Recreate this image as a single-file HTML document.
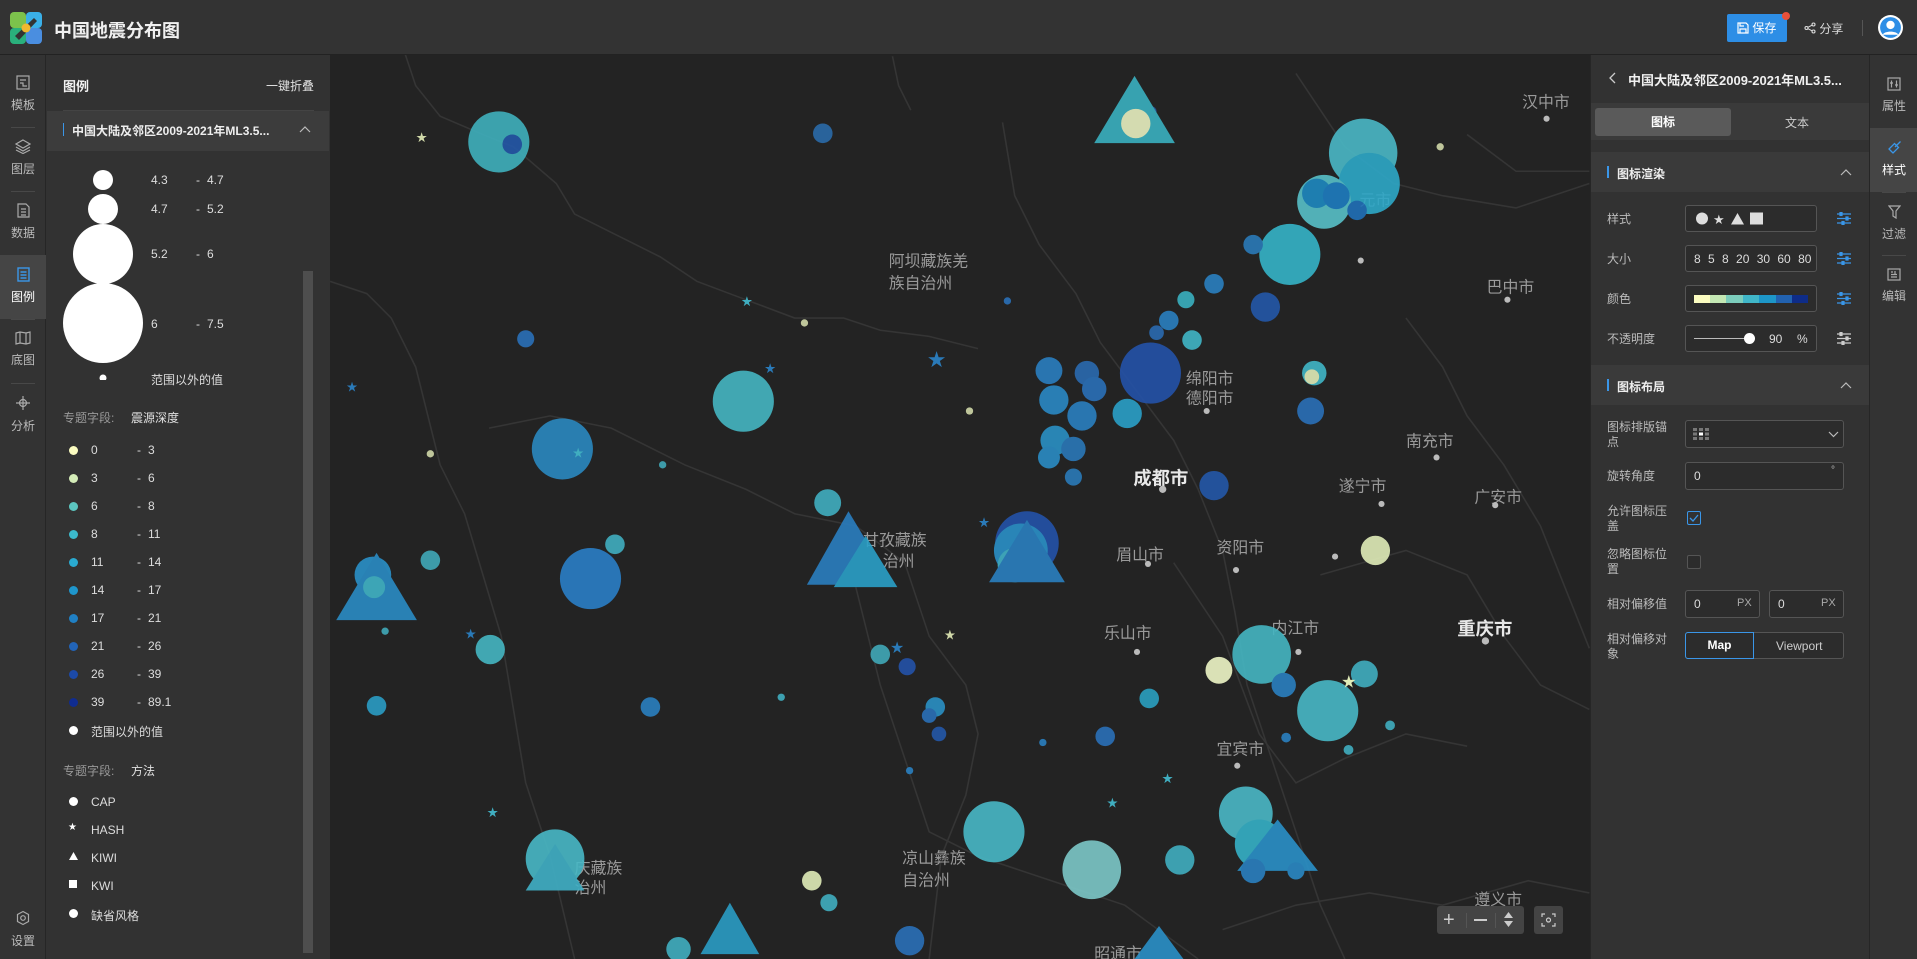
<!DOCTYPE html>
<html><head><meta charset="utf-8">
<style>
*{margin:0;padding:0;box-sizing:border-box}
body{width:1917px;height:959px;overflow:hidden;background:#232323;font-family:"Liberation Sans","Noto Sans CJK SC",sans-serif;color:#ddd;position:relative;font-size:12px}
.abs{position:absolute}
#map{position:absolute;left:0;top:0;width:1917px;height:959px}
#hdr{left:0;top:0;width:1917px;height:55px;background:#333;border-bottom:1px solid #222}
#lbar{left:0;top:55px;width:46px;height:904px;background:#333;border-right:1px solid #262626}
#lpanel{left:46px;top:55px;width:284px;height:904px;background:#323232}
#rpanel{left:1590px;top:55px;width:279px;height:904px;background:#323232;border-left:1px solid #262626}
#rbar{left:1869px;top:55px;width:48px;height:904px;background:#333;border-left:1px solid #262626}
.ni{position:absolute;left:0;width:46px;text-align:center;font-size:12px;color:#bbb}
.ni svg{display:block;margin:0 auto 6px}
.sep{position:absolute;left:11px;width:24px;height:1px;background:#484848}
.t{position:absolute;white-space:nowrap}
.dot{position:absolute;width:9px;height:9px;border-radius:50%}
.lbl{position:absolute;left:16px;color:#bbb;font-size:12px;line-height:15px}
.box{position:absolute;border:1px solid #555;border-radius:3px;background:#2c2c2c}
.adj{position:absolute;left:246px}
</style></head><body>
<svg id="map" viewBox="0 0 1568 784" preserveAspectRatio="none">
<rect width="1568" height="784" fill="#232323"/>
<g fill="none" stroke="#353535" stroke-width="1.3">
<path d="M330 40 L340 70 L360 95 L395 110 L420 120 L455 150 L470 175 L500 190 L540 210 L570 230 L610 245 L650 260 L690 260 L720 270 L760 275 L800 285"/>
<path d="M270 230 L300 240 L320 260 L340 300 L350 340 L360 380 L380 420 L395 470 L410 520 L420 580 L430 640 L450 700 L470 784"/>
<path d="M400 350 L450 340 L500 350 L560 380 L610 400 L650 420 L700 430 L740 460 L760 520 L790 560 L800 600 L790 650 L770 700 L760 784"/>
<path d="M820 100 L830 160 L850 200 L880 240 L900 280 L930 320 L960 360 L980 400 L1000 450 L1010 500 L1020 560 L1040 620 L1060 680 L1080 740 L1100 784"/>
<path d="M1060 60 L1080 90 L1100 120 L1140 150 L1180 160 L1240 170 L1300 150"/>
<path d="M1150 260 L1180 300 L1200 340 L1230 380 L1260 430 L1280 480 L1300 530"/>
<path d="M1080 470 L1150 450 L1200 470 L1230 520 L1260 560 L1300 580"/>
<path d="M960 460 L1000 520 L1030 600 L1060 640 L1100 620 L1150 600 L1200 610"/>
<path d="M700 480 L720 560 L740 620 L760 680 L800 700 L860 720 L920 740 L980 784"/>
<path d="M1200 110 L1240 140 L1300 140"/>
<path d="M1000 760 L1060 740 L1120 730 L1180 740 L1250 720 L1300 730"/>
<path d="M730 46 L735 70 L745 90"/>
</g>
<g font-family="Liberation Sans,Noto Sans CJK SC,sans-serif" font-size="13" fill="#9a9a9a">
<text x="727" y="218">阿坝藏族羌</text><text x="727" y="236">族自治州</text>
<text x="970" y="314">绵阳市</text><text x="970" y="330">德阳市</text>
<text x="927" y="396" fill="#e8e8e8" font-size="15" font-weight="bold">成都市</text>
<text x="1150" y="365">南充市</text><text x="1095" y="402">遂宁市</text><text x="1206" y="411">广安市</text>
<text x="913" y="458">眉山市</text><text x="995" y="452">资阳市</text><text x="903" y="522">乐山市</text>
<text x="1040" y="518">内江市</text><text x="1192" y="519" fill="#e8e8e8" font-size="15" font-weight="bold">重庆市</text>
<text x="995" y="617">宜宾市</text><text x="1216" y="239">巴中市</text><text x="1245" y="88">汉中市</text>
<text x="1112" y="168">元市</text><text x="706" y="446">甘孜藏族</text><text x="722" y="463">治州</text>
<text x="738" y="706">凉山彝族</text><text x="738" y="724">自治州</text><text x="470" y="714">庆藏族</text><text x="470" y="730">治州</text>
<text x="1206" y="740">遵义市</text><text x="895" y="784">昭通市</text>
</g>
<g fill="#bbb"><circle cx="951" cy="400" r="3"/><circle cx="1215" cy="524" r="3"/><circle cx="1012" cy="626" r="2.5"/><circle cx="1062" cy="533" r="2.5"/><circle cx="1092" cy="455" r="2.5"/><circle cx="1175" cy="374" r="2.5"/><circle cx="1130" cy="412" r="2.5"/><circle cx="1233" cy="245" r="2.5"/><circle cx="1265" cy="97" r="2.5"/><circle cx="939" cy="461" r="2.5"/><circle cx="1011" cy="466" r="2.5"/><circle cx="930" cy="533" r="2.5"/><circle cx="1113" cy="213" r="2.5"/><circle cx="1223" cy="413" r="2.5"/><circle cx="987" cy="336" r="2.5"/></g>
<g opacity="0.9">
<circle cx="408" cy="116" r="25" fill="#3fb0bd"/><circle cx="419" cy="118" r="8" fill="#2458a8"/>
<circle cx="673" cy="109" r="8" fill="#2a6aa8"/><circle cx="942" cy="91" r="4" fill="#2a58a0"/>
<polygon points="928,62 961,117 895,117" fill="#3ab0c0"/><circle cx="929" cy="101" r="12" fill="#e8f0c0"/>
<circle cx="1115" cy="125" r="28" fill="#4ab8c6"/><circle cx="1120" cy="150" r="25" fill="#2ea8c8"/>
<circle cx="1083" cy="165" r="22" fill="#58c0c8"/><circle cx="1077" cy="158" r="12" fill="#1e88c0"/><circle cx="1093" cy="160" r="11" fill="#1e7cc0"/><circle cx="1110" cy="172" r="8" fill="#2070b8"/>
<circle cx="1055" cy="208" r="25" fill="#35b4c8"/><circle cx="1035" cy="251" r="12" fill="#2458a8"/><circle cx="1025" cy="200" r="8" fill="#2a7ab8"/>
<circle cx="993" cy="232" r="8" fill="#2a80c0"/><circle cx="970" cy="245" r="7" fill="#3ab0c0"/><circle cx="956" cy="262" r="8" fill="#2a80c0"/><circle cx="975" cy="278" r="8" fill="#40b6c6"/><circle cx="946" cy="272" r="6" fill="#2a6ab0"/>
<circle cx="941" cy="305" r="25" fill="#2452a8"/><circle cx="889" cy="305" r="10" fill="#2a6ab0"/><circle cx="858" cy="303" r="11" fill="#2a7ec0"/>
<circle cx="862" cy="327" r="12" fill="#2a88c4"/><circle cx="895" cy="318" r="10" fill="#2a70b8"/><circle cx="922" cy="338" r="12" fill="#2aa0c8"/><circle cx="885" cy="340" r="12" fill="#2a80c0"/><circle cx="863" cy="360" r="12" fill="#2a90c4"/><circle cx="878" cy="367" r="10" fill="#2a78b8"/><circle cx="878" cy="390" r="7" fill="#2a7ab8"/><circle cx="858" cy="374" r="9" fill="#2a8cc4"/>
<circle cx="1075" cy="305" r="10" fill="#40b6c6"/><circle cx="1073" cy="308" r="6" fill="#e0ecb8"/><circle cx="1072" cy="336" r="11" fill="#2a70b8"/>
<circle cx="608" cy="328" r="25" fill="#45b6c2"/><circle cx="460" cy="367" r="25" fill="#2a88c0"/><circle cx="993" cy="397" r="12" fill="#2458a8"/><circle cx="677" cy="411" r="11" fill="#40aec0"/>
<circle cx="840" cy="444" r="26" fill="#2452a8"/><circle cx="835" cy="450" r="22" fill="#2a90c8"/><circle cx="830" cy="462" r="14" fill="#40b0c6"/>
<polygon points="840,425 871,476 809,476" fill="#2a80c0"/>
<polygon points="694,418 730,478 660,478" fill="#2a7ec0"/><polygon points="708,438 734,480 682,480" fill="#2aa0c8"/>
<circle cx="483" cy="473" r="25" fill="#2a7ec6"/>
<circle cx="305" cy="470" r="15" fill="#2a90c8"/><polygon points="308,452 341,507 275,507" fill="#2a8cc4"/><circle cx="306" cy="480" r="9" fill="#40b4c6"/>
<circle cx="352" cy="458" r="8" fill="#40a8b8"/><circle cx="503" cy="445" r="8" fill="#40aec0"/><circle cx="1125" cy="450" r="12" fill="#e0ecb8"/>
<circle cx="401" cy="531" r="12" fill="#45b6c2"/><circle cx="1032" cy="535" r="24" fill="#45b6c2"/><circle cx="997" cy="548" r="11" fill="#eef6c6"/>
<circle cx="1050" cy="560" r="10" fill="#2a80c0"/><circle cx="1086" cy="581" r="25" fill="#48b8c6"/><circle cx="1116" cy="551" r="11" fill="#40aec0"/>
<circle cx="308" cy="577" r="8" fill="#2a9cc4"/><circle cx="532" cy="578" r="8" fill="#2a80c0"/><circle cx="765" cy="578" r="8" fill="#2a90c4"/><circle cx="940" cy="571" r="8" fill="#2aa0c0"/><circle cx="904" cy="602" r="8" fill="#2a70b8"/>
<circle cx="720" cy="535" r="8" fill="#40a8b8"/><circle cx="742" cy="545" r="7" fill="#2452a8"/><circle cx="760" cy="585" r="6" fill="#2a70b8"/><circle cx="768" cy="600" r="6" fill="#2458a8"/>
<circle cx="813" cy="680" r="25" fill="#48b8c6"/><circle cx="893" cy="711" r="24" fill="#7cc8c8"/>
<circle cx="1019" cy="665" r="22" fill="#4ab8c6"/><circle cx="1030" cy="690" r="20" fill="#35b0c6"/><circle cx="965" cy="703" r="12" fill="#40aec0"/>
<polygon points="1045,670 1078,712 1012,712" fill="#2a90c8"/><circle cx="1025" cy="712" r="10" fill="#2a80c0"/><circle cx="1060" cy="712" r="7" fill="#2a88c4"/>
<circle cx="454" cy="702" r="24" fill="#48b8c6"/><polygon points="454,690 478,728 430,728" fill="#40b0c6"/>
<circle cx="664" cy="720" r="8" fill="#e0ecb8"/><circle cx="678" cy="738" r="7" fill="#40aec0"/>
<circle cx="744" cy="769" r="12" fill="#2a70b8"/><circle cx="555" cy="776" r="10" fill="#40aec0"/>
<polygon points="597,738 621,780 573,780" fill="#2a9cc4"/><polygon points="948,757 968,784 928,784" fill="#2a90c8"/>
<circle cx="658" cy="264" r="3" fill="#d0d8a8"/><circle cx="793" cy="336" r="3" fill="#d0d8a8"/><circle cx="352" cy="371" r="3" fill="#d0d8a8"/><circle cx="1178" cy="120" r="3" fill="#d0d8a8"/><circle cx="430" cy="277" r="7" fill="#2a70b8"/><circle cx="542" cy="380" r="3" fill="#40a8b8"/><circle cx="315" cy="516" r="3" fill="#40a8b8"/><circle cx="824" cy="246" r="3" fill="#2a70b8"/><circle cx="639" cy="570" r="3" fill="#40aec0"/>
<circle cx="744" cy="630" r="3" fill="#2a80c0"/><circle cx="853" cy="607" r="3" fill="#2a80c0"/><circle cx="1052" cy="603" r="4" fill="#2a80c0"/><circle cx="1103" cy="613" r="4" fill="#40aec0"/><circle cx="1137" cy="593" r="4" fill="#40aec0"/>
</g>
<g fill="#2a7ab8" font-size="11" font-family="DejaVu Sans,sans-serif"><text x="758" y="300" font-size="18">★</text><text x="340" y="116" fill="#d0d8a8">★</text><text x="625" y="305">★</text><text x="283" y="320">★</text><text x="468" y="374" fill="#40aec0">★</text><text x="380" y="522">★</text><text x="1097" y="562" fill="#e0ecb8" font-size="14">★</text><text x="800" y="431">★</text><text x="772" y="523" fill="#d0d8a8">★</text><text x="728" y="534" font-size="13">★</text><text x="606" y="250" fill="#40aec0">★</text><text x="950" y="640" fill="#40aec0">★</text><text x="905" y="660" fill="#40aec0">★</text><text x="398" y="668" fill="#40aec0">★</text></g>
</svg>

<!-- header -->
<div id="hdr" class="abs">
<svg class="abs" style="left:10px;top:12px" width="32" height="32" viewBox="0 0 32 32"><rect x="0" y="0" width="16" height="16" rx="4" fill="#7cc24c"/><rect x="16" y="0" width="16" height="16" rx="4" fill="#3ab0e8"/><rect x="0" y="16" width="16" height="16" rx="4" fill="#2ab07c"/><rect x="16" y="16" width="16" height="16" rx="4" fill="#4a8ee0"/><path d="M5 24 L24 6 L27 9 L9 28Z" fill="#333"/><circle cx="16" cy="16" r="4.5" fill="#f0b830"/></svg>
<div class="t" style="left:54px;top:17px;font-size:18px;font-weight:bold;color:#f0f0f0">中国地震分布图</div>
<div class="abs" style="left:1727px;top:14px;width:60px;height:28px;background:#2d8ee6;border-radius:2px;color:#fff;font-size:12px;line-height:28px;padding-left:10px">
<svg style="vertical-align:-2px" width="12" height="12" viewBox="0 0 12 12" fill="none" stroke="#fff" stroke-width="1.2"><path d="M1 1h8l2 2v8H1z M3 11V7h6v4 M3 1v3h4"/></svg> 保存</div>
<div class="abs" style="left:1782px;top:12px;width:8px;height:8px;border-radius:50%;background:#e8503a"></div>
<div class="t" style="left:1804px;top:20px;color:#ddd;font-size:12px"><svg style="vertical-align:-1px" width="12" height="12" viewBox="0 0 12 12" fill="none" stroke="#ddd" stroke-width="1.1"><circle cx="2.5" cy="6" r="1.5"/><circle cx="9.5" cy="2.5" r="1.5"/><circle cx="9.5" cy="9.5" r="1.5"/><path d="M4 5.3L8 3.2M4 6.7L8 8.8"/></svg> 分享</div>
<div class="abs" style="left:1862px;top:20px;width:1px;height:16px;background:#555"></div>
<svg class="abs" style="left:1878px;top:15px" width="25" height="25" viewBox="0 0 24 24"><circle cx="12" cy="12" r="12" fill="#fff"/><circle cx="12" cy="12" r="10" fill="#2d8ee6"/><circle cx="12" cy="9.5" r="4" fill="#fff"/><path d="M4.5 19c1.5-4 13.5-4 15 0" fill="#fff"/></svg>
</div>

<!-- left icon bar -->
<div id="lbar" class="abs">
<div class="ni" style="top:20px"><svg width="14" height="15" viewBox="0 0 14 15" fill="none" stroke="#aaa" stroke-width="1.2"><rect x="1" y="1" width="12" height="13"/><path d="M4 5h6M4 8h3v3h4"/></svg>模板</div>
<div class="sep" style="top:72px"></div>
<div class="ni" style="top:84px"><svg width="16" height="15" viewBox="0 0 16 15" fill="none" stroke="#aaa" stroke-width="1.2"><path d="M8 1L15 5L8 9L1 5Z M1 8L8 12L15 8 M1 11L8 14.5L15 11"/></svg>图层</div>
<div class="sep" style="top:136px"></div>
<div class="ni" style="top:148px"><svg width="13" height="15" viewBox="0 0 13 15" fill="none" stroke="#aaa" stroke-width="1.2"><path d="M1 1h8l3 3v10H1z M4 6h5M4 9h5M4 12h5"/></svg>数据</div>
<div class="abs" style="left:0;top:200px;width:46px;height:64px;background:#454545"></div>
<div class="ni" style="top:212px;color:#fff"><svg width="13" height="15" viewBox="0 0 13 15" fill="none" stroke="#3a96e8" stroke-width="1.4"><rect x="1" y="1" width="11" height="13"/><path d="M3.5 5h6M3.5 8h6M3.5 11h6"/></svg>图例</div>
<div class="sep" style="top:264px"></div>
<div class="ni" style="top:276px"><svg width="16" height="14" viewBox="0 0 16 14" fill="none" stroke="#aaa" stroke-width="1.2"><path d="M1 2L5 1L11 2L15 1V12L11 13L5 12L1 13Z M5 1V12M11 2V13"/></svg>底图</div>
<div class="sep" style="top:328px"></div>
<div class="ni" style="top:340px"><svg width="16" height="16" viewBox="0 0 16 16" fill="none" stroke="#aaa" stroke-width="1.2"><circle cx="8" cy="8" r="3.5"/><path d="M8 1v14M1 8h14"/></svg>分析</div>
<div class="ni" style="top:855px"><svg width="16" height="16" viewBox="0 0 16 16" fill="none" stroke="#aaa" stroke-width="1.2"><path d="M8 1.5L13.5 4.5V11.5L8 14.5L2.5 11.5V4.5Z"/><circle cx="8" cy="8" r="2.3"/></svg>设置</div>
</div>

<!-- left panel -->
<div id="lpanel" class="abs">
<div class="t" style="left:17px;top:21px;font-size:13px;font-weight:bold;color:#f2f2f2">图例</div>
<div class="t" style="left:220px;top:22px;font-size:12px;color:#e0e0e0">一键折叠</div>
<div class="abs" style="left:17px;top:55px;width:251px;height:1px;background:#444"></div>
<div class="abs" style="left:1px;top:56px;width:282px;height:40px;background:#3c3c3c"></div>
<div class="abs" style="left:17px;top:68px;width:1px;height:13px;background:#3a96e8"></div>
<div class="t" style="left:26px;top:67px;font-size:12px;font-weight:bold;color:#eee">中国大陆及邻区2009-2021年ML3.5...</div>
<svg class="abs" style="left:253px;top:70px" width="12" height="8" viewBox="0 0 12 8" fill="none" stroke="#bbb" stroke-width="1.2"><path d="M1 7L6 2L11 7"/></svg>
<div class="abs" style="left:257px;top:216px;width:10px;height:682px;background:#4e4e4e"></div>
<svg class="abs" style="left:0;top:110px" width="120" height="215"><g fill="#fff"><circle cx="57" cy="15" r="10"/><circle cx="57" cy="44" r="15"/><circle cx="57" cy="89" r="30"/><circle cx="57" cy="158" r="40"/><circle cx="57" cy="213" r="3.5"/></g></svg>
<div style="position:absolute;left:105px;top:0;font-size:12px;color:#ddd">
<div class="t" style="top:118px">4.3</div><div class="t" style="left:45px;top:118px">-</div><div class="t" style="left:56px;top:118px">4.7</div>
<div class="t" style="top:147px">4.7</div><div class="t" style="left:45px;top:147px">-</div><div class="t" style="left:56px;top:147px">5.2</div>
<div class="t" style="top:192px">5.2</div><div class="t" style="left:45px;top:192px">-</div><div class="t" style="left:56px;top:192px">6</div>
<div class="t" style="top:262px">6</div><div class="t" style="left:45px;top:262px">-</div><div class="t" style="left:56px;top:262px">7.5</div>
<div class="t" style="top:316px">范围以外的值</div>
</div>
<div class="t" style="left:17px;top:354px;color:#999">专题字段:</div><div class="t" style="left:85px;top:354px;color:#e0e0e0">震源深度</div>
<div style="position:absolute;left:0;top:0;font-size:12px;color:#ddd">
<div class="dot" style="left:23px;top:391px;background:#fbfcc0"></div><div class="t" style="left:45px;top:388px">0</div><div class="t" style="left:91px;top:388px">-</div><div class="t" style="left:102px;top:388px">3</div>
<div class="dot" style="left:23px;top:419px;background:#d4ecb8"></div><div class="t" style="left:45px;top:416px">3</div><div class="t" style="left:91px;top:416px">-</div><div class="t" style="left:102px;top:416px">6</div>
<div class="dot" style="left:23px;top:447px;background:#5cc6c0"></div><div class="t" style="left:45px;top:444px">6</div><div class="t" style="left:91px;top:444px">-</div><div class="t" style="left:102px;top:444px">8</div>
<div class="dot" style="left:23px;top:475px;background:#3cbacc"></div><div class="t" style="left:45px;top:472px">8</div><div class="t" style="left:91px;top:472px">-</div><div class="t" style="left:102px;top:472px">11</div>
<div class="dot" style="left:23px;top:503px;background:#2aaad0"></div><div class="t" style="left:45px;top:500px">11</div><div class="t" style="left:91px;top:500px">-</div><div class="t" style="left:102px;top:500px">14</div>
<div class="dot" style="left:23px;top:531px;background:#1e96cc"></div><div class="t" style="left:45px;top:528px">14</div><div class="t" style="left:91px;top:528px">-</div><div class="t" style="left:102px;top:528px">17</div>
<div class="dot" style="left:23px;top:559px;background:#2080c4"></div><div class="t" style="left:45px;top:556px">17</div><div class="t" style="left:91px;top:556px">-</div><div class="t" style="left:102px;top:556px">21</div>
<div class="dot" style="left:23px;top:587px;background:#2264b8"></div><div class="t" style="left:45px;top:584px">21</div><div class="t" style="left:91px;top:584px">-</div><div class="t" style="left:102px;top:584px">26</div>
<div class="dot" style="left:23px;top:615px;background:#1c4aa8"></div><div class="t" style="left:45px;top:612px">26</div><div class="t" style="left:91px;top:612px">-</div><div class="t" style="left:102px;top:612px">39</div>
<div class="dot" style="left:23px;top:643px;background:#102c90"></div><div class="t" style="left:45px;top:640px">39</div><div class="t" style="left:91px;top:640px">-</div><div class="t" style="left:102px;top:640px">89.1</div>
<div class="dot" style="left:23px;top:671px;background:#fff"></div><div class="t" style="left:45px;top:668px">范围以外的值</div>
<div class="t" style="left:17px;top:707px;color:#999">专题字段:</div><div class="t" style="left:85px;top:707px;color:#e0e0e0">方法</div>
<div class="dot" style="left:23px;top:742px;background:#fff"></div><div class="t" style="left:45px;top:740px">CAP</div>
<div class="t" style="left:22px;top:767px;font-size:10px;color:#fff;font-family:'DejaVu Sans',sans-serif">★</div><div class="t" style="left:45px;top:768px">HASH</div>
<svg class="abs" style="left:23px;top:797px" width="9" height="8"><path d="M4.5 0L9 8H0Z" fill="#fff"/></svg><div class="t" style="left:45px;top:796px">KIWI</div>
<div class="abs" style="left:23px;top:825px;width:8px;height:8px;background:#fff"></div><div class="t" style="left:45px;top:824px">KWI</div>
<div class="dot" style="left:23px;top:854px;background:#fff"></div><div class="t" style="left:45px;top:852px">缺省风格</div>
</div>
</div>

<!-- map controls -->
<div class="abs" style="left:1437px;top:906px;width:87px;height:28px;background:#444;border-radius:3px"></div>
<div class="t" style="left:1443px;top:906px;font-size:20px;color:#ccc;line-height:28px">+</div>
<div class="abs" style="left:1466px;top:913px;width:1px;height:15px;background:#555"></div>
<div class="abs" style="left:1474px;top:919px;width:13px;height:1.5px;background:#ccc"></div>
<div class="abs" style="left:1495px;top:913px;width:1px;height:15px;background:#555"></div>
<svg class="abs" style="left:1504px;top:912px" width="9" height="15"><path d="M4.5 0L9 6H0Z M0 9H9L4.5 15Z" fill="#ccc"/></svg>
<div class="abs" style="left:1534px;top:906px;width:29px;height:28px;background:#444;border-radius:3px"></div>
<svg class="abs" style="left:1541px;top:913px" width="15" height="14" fill="none" stroke="#ccc" stroke-width="1.2"><path d="M1 4V1h3M11 1h3v3M14 10v3h-3M4 13H1v-3"/><circle cx="7.5" cy="7" r="2"/></svg>

<!-- right panel -->
<div id="rpanel" class="abs">
<svg class="abs" style="left:18px;top:17px" width="8" height="12" viewBox="0 0 8 12" fill="none" stroke="#ccc" stroke-width="1.3"><path d="M6 1L1 6L6 11"/></svg>
<div class="t" style="left:37px;top:15px;font-size:13px;font-weight:bold;color:#f0f0f0">中国大陆及邻区2009-2021年ML3.5...</div>
<div class="abs" style="left:0;top:48px;width:279px;height:37px;background:#3a3a3a"></div>
<div class="abs" style="left:4px;top:53px;width:136px;height:28px;background:#5a5a5a;border-radius:3px;text-align:center;line-height:28px;font-weight:bold;color:#fff">图标</div>
<div class="t" style="left:194px;top:59px;color:#ccc">文本</div>
<div class="abs" style="left:0;top:97px;width:279px;height:40px;background:#3a3a3a"></div>
<div class="abs" style="left:16px;top:111px;width:2px;height:12px;background:#3a96e8"></div>
<div class="t" style="left:26px;top:110px;font-weight:bold;color:#eee">图标渲染</div>
<svg class="abs" style="left:249px;top:113px" width="12" height="8" fill="none" stroke="#bbb" stroke-width="1.2"><path d="M1 7L6 2L11 7"/></svg>
<div class="lbl" style="top:157px">样式</div>
<div class="box" style="left:94px;top:150px;width:132px;height:27px"></div>
<svg class="abs" style="left:104px;top:157px" width="90" height="13"><circle cx="7" cy="6.5" r="6" fill="#ddd"/><text x="18" y="12" font-size="13" fill="#ddd" font-family="DejaVu Sans">★</text><path d="M36 12.5L42.5 1L49 12.5Z" fill="#ddd"/><rect x="55" y="0.5" width="13" height="12" fill="#ddd"/></svg>
<div class="lbl" style="top:197px">大小</div>
<div class="box" style="left:94px;top:190px;width:132px;height:27px"></div>
<div class="t" style="left:103px;top:197px;color:#ddd;word-spacing:4px">8 5 8 20 30 60 80</div>
<div class="lbl" style="top:237px">颜色</div>
<div class="box" style="left:94px;top:230px;width:132px;height:27px"></div>
<div class="abs" style="left:103px;top:240px;width:114px;height:8px;background:linear-gradient(90deg,#fbfcc0 0 14%,#c4e8b4 14% 28%,#7ccdbc 28% 43%,#40b6c8 43% 57%,#1d96c8 57% 72%,#2262b0 72% 86%,#0e2c88 86%)"></div>
<div class="lbl" style="top:277px">不透明度</div>
<div class="box" style="left:94px;top:270px;width:132px;height:27px"></div>
<div class="abs" style="left:103px;top:283px;width:57px;height:1px;background:#bbb"></div>
<div class="abs" style="left:153px;top:278px;width:11px;height:11px;border-radius:50%;background:#fff"></div>
<div class="t" style="left:178px;top:277px;color:#ddd">90</div><div class="t" style="left:206px;top:277px;color:#ddd">%</div>
<svg class="adj" style="top:157px" width="14" height="13" fill="none" stroke="#3a96e8" stroke-width="1.2"><path d="M0 2h14M0 6.5h14M0 11h14"/><rect x="3" y="0.5" width="2" height="3" fill="#3a96e8"/><rect x="9" y="5" width="2" height="3" fill="#3a96e8"/><rect x="5" y="9.5" width="2" height="3" fill="#3a96e8"/></svg>
<svg class="adj" style="top:197px" width="14" height="13" fill="none" stroke="#3a96e8" stroke-width="1.2"><path d="M0 2h14M0 6.5h14M0 11h14"/><rect x="3" y="0.5" width="2" height="3" fill="#3a96e8"/><rect x="9" y="5" width="2" height="3" fill="#3a96e8"/><rect x="5" y="9.5" width="2" height="3" fill="#3a96e8"/></svg>
<svg class="adj" style="top:237px" width="14" height="13" fill="none" stroke="#3a96e8" stroke-width="1.2"><path d="M0 2h14M0 6.5h14M0 11h14"/><rect x="3" y="0.5" width="2" height="3" fill="#3a96e8"/><rect x="9" y="5" width="2" height="3" fill="#3a96e8"/><rect x="5" y="9.5" width="2" height="3" fill="#3a96e8"/></svg>
<svg class="adj" style="top:277px" width="14" height="13" fill="none" stroke="#ccc" stroke-width="1.2"><path d="M0 2h14M0 6.5h14M0 11h14"/><rect x="3" y="0.5" width="2" height="3" fill="#ccc"/><rect x="9" y="5" width="2" height="3" fill="#ccc"/><rect x="5" y="9.5" width="2" height="3" fill="#ccc"/></svg>
<div class="abs" style="left:0;top:310px;width:279px;height:40px;background:#3a3a3a"></div>
<div class="abs" style="left:16px;top:324px;width:2px;height:12px;background:#3a96e8"></div>
<div class="t" style="left:26px;top:323px;font-weight:bold;color:#eee">图标布局</div>
<svg class="abs" style="left:249px;top:326px" width="12" height="8" fill="none" stroke="#bbb" stroke-width="1.2"><path d="M1 7L6 2L11 7"/></svg>
<div class="lbl" style="top:365px">图标排版锚<br>点</div>
<div class="box" style="left:94px;top:365px;width:159px;height:28px"></div>
<svg class="abs" style="left:102px;top:373px" width="17" height="12"><g fill="#777"><rect x="0" y="0" width="4" height="3"/><rect x="6" y="0" width="4" height="3"/><rect x="12" y="0" width="4" height="3"/><rect x="0" y="4.5" width="4" height="3"/><rect x="12" y="4.5" width="4" height="3"/><rect x="0" y="9" width="4" height="3"/><rect x="6" y="9" width="4" height="3"/><rect x="12" y="9" width="4" height="3"/></g><rect x="6" y="4.5" width="4" height="3" fill="#fff"/></svg>
<svg class="abs" style="left:237px;top:376px" width="11" height="7" fill="none" stroke="#bbb" stroke-width="1.2"><path d="M1 1L5.5 5.5L10 1"/></svg>
<div class="lbl" style="top:414px">旋转角度</div>
<div class="box" style="left:94px;top:407px;width:159px;height:28px"></div>
<div class="t" style="left:103px;top:414px;color:#ddd">0</div><div class="t" style="left:240px;top:410px;color:#bbb;font-size:10px">°</div>
<div class="lbl" style="top:449px">允许图标压<br>盖</div>
<div class="abs" style="left:96px;top:456px;width:14px;height:14px;border:1px solid #3a96e8;border-radius:2px"></div>
<svg class="abs" style="left:98px;top:459px" width="10" height="8" fill="none" stroke="#3a96e8" stroke-width="1.3"><path d="M1 4L4 7L9 1"/></svg>
<div class="lbl" style="top:492px">忽略图标位<br>置</div>
<div class="abs" style="left:96px;top:500px;width:14px;height:14px;border:1px solid #555;border-radius:2px;background:#2c2c2c"></div>
<div class="lbl" style="top:542px">相对偏移值</div>
<div class="box" style="left:94px;top:535px;width:75px;height:28px"></div>
<div class="t" style="left:103px;top:542px;color:#ddd">0</div><div class="t" style="left:146px;top:542px;color:#aaa;font-size:11px">PX</div>
<div class="box" style="left:178px;top:535px;width:75px;height:28px"></div>
<div class="t" style="left:187px;top:542px;color:#ddd">0</div><div class="t" style="left:230px;top:542px;color:#aaa;font-size:11px">PX</div>
<div class="lbl" style="top:577px">相对偏移对<br>象</div>
<div class="box" style="left:94px;top:577px;width:159px;height:27px"></div>
<div class="abs" style="left:94px;top:577px;width:69px;height:27px;border:1px solid #3a96e8;border-radius:3px 0 0 3px;background:#2c2c2c;text-align:center;line-height:25px;font-weight:bold;color:#fff">Map</div>
<div class="t" style="left:185px;top:584px;color:#ccc">Viewport</div>
</div>

<!-- right icon bar -->
<div id="rbar" class="abs">
<div class="ni" style="top:22px;width:48px"><svg width="14" height="14" viewBox="0 0 14 14" fill="none" stroke="#aaa" stroke-width="1.2"><rect x="1" y="1" width="12" height="12"/><path d="M4.5 3.5v7M9.5 3.5v7M3 6h3M8 8h3"/></svg>属性</div>
<div class="abs" style="left:0;top:73px;width:48px;height:64px;background:#454545"></div>
<div class="ni" style="top:85px;width:48px;color:#fff"><svg width="15" height="15" viewBox="0 0 15 15" fill="none" stroke="#3a96e8" stroke-width="1.3"><path d="M13.5 1.5L8 7 M9.5 5.5l-2-2 L2 9l4 4 5.5-5.5z M3.5 10.5l1.5 1.5"/></svg>样式</div>
<div class="sep" style="top:137px;left:12px"></div>
<div class="ni" style="top:150px;width:48px"><svg width="13" height="14" viewBox="0 0 13 14" fill="none" stroke="#aaa" stroke-width="1.2"><path d="M1 1h11L8 6v7L5 11V6Z"/></svg>过滤</div>
<div class="sep" style="top:200px;left:12px"></div>
<div class="ni" style="top:213px;width:48px"><svg width="14" height="13" viewBox="0 0 14 13" fill="none" stroke="#aaa" stroke-width="1.2"><rect x="1" y="1" width="12" height="11"/><path d="M4 4h2M4 6.5h6M4 9h6M8 3v3"/></svg>编辑</div>
</div>
</body></html>
